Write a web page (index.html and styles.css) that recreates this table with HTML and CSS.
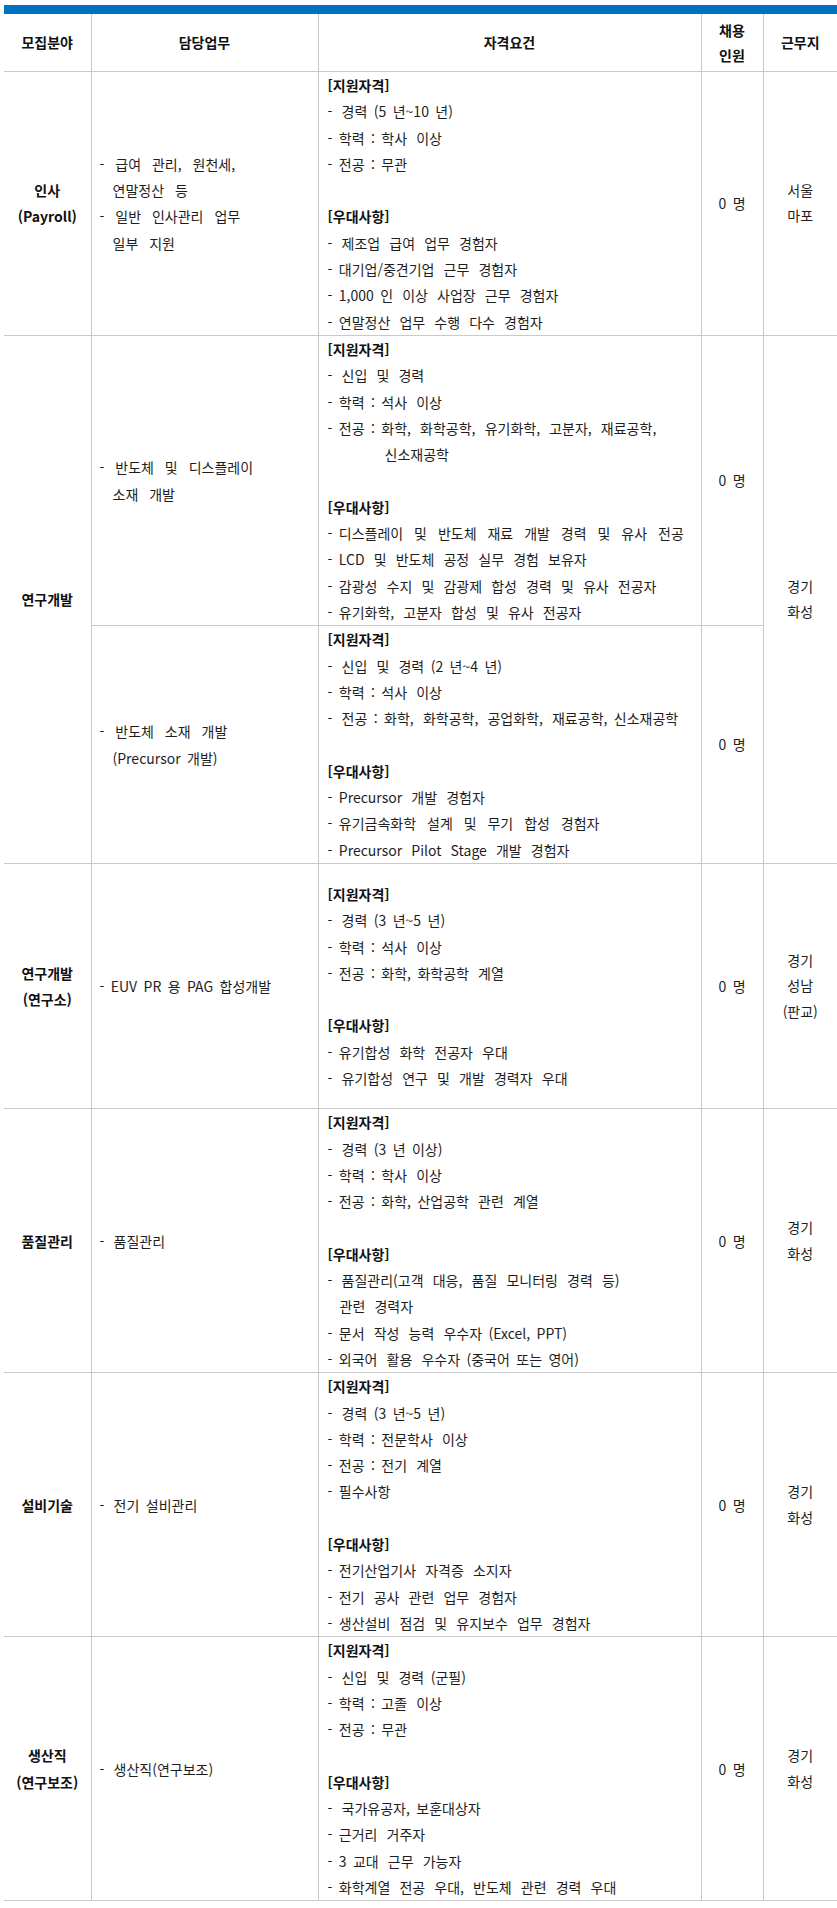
FILE: index.html
```html
<!DOCTYPE html>
<html lang="ko">
<head>
<meta charset="utf-8">
<title>채용 모집요강</title>
<link rel="stylesheet" href="styles.css">
</head>
<body>
<div class="wrap">
  <div class="bar"></div>
  <table class="jobs">
    <colgroup>
      <col class="w1"><col class="w2"><col class="w3"><col class="w4"><col class="w5">
    </colgroup>
    <thead>
      <tr>
        <th class="c1">모집분야</th>
        <th class="c2">담당업무</th>
        <th class="c3">자격요건</th>
        <th class="c4">채용<br>인원</th>
        <th class="c5">근무지</th>
      </tr>
    </thead>
    <tbody>
      <tr>
        <td class="c1 field">인사<br>(Payroll)</td>
        <td class="c2 duty">
          <p class="wide">- 급여 관리, 원천세,</p>
          <p class="wide ind">연말정산 등</p>
          <p class="wide">- 일반 인사관리 업무</p>
          <p class="wide ind">일부 지원</p>
        </td>
        <td class="c3 req">
          <p class="head">[지원자격]</p>
          <p>-&thinsp; 경력 (5 년~10 년)</p>
          <p>- 학력 : <span class="w">학사 이상</span></p>
          <p>- 전공 : 무관</p>
          <p class="head sec">[우대사항]</p>
          <p>-&thinsp; <span class="w">제조업 급여 업무 경험자</span></p>
          <p>- <span class="w">대기업/중견기업 근무 경험자</span></p>
          <p>- 1,000 <span class="w">인 이상 사업장 근무 경험자</span></p>
          <p>- <span class="w">연말정산 업무 수행 다수 경험자</span></p>
        </td>
        <td class="c4 num">0 명</td>
        <td class="c5 loc">서울<br>마포</td>
      </tr>
      <tr>
        <td class="c1 field" rowspan="2">연구개발</td>
        <td class="c2 duty">
          <p class="wide">- 반도체 및 디스플레이</p>
          <p class="wide ind">소재 개발</p>
        </td>
        <td class="c3 req">
          <p class="head">[지원자격]</p>
          <p>-&thinsp; <span class="w">신입 및 경력</span></p>
          <p>- 학력 : <span class="w">석사 이상</span></p>
          <p>- 전공 : <span class="w">화학, 화학공학, 유기화학, 고분자, 재료공학,</span></p>
          <p class="cont">신소재공학</p>
          <p class="head sec">[우대사항]</p>
          <p>- <span class="w2">디스플레이 및 반도체 재료 개발 경력 및 유사 전공</span></p>
          <p>- <span class="w">LCD 및 반도체 공정 실무 경험 보유자</span></p>
          <p>- <span class="w">감광성 수지 및 감광제 합성 경력 및 유사 전공자</span></p>
          <p>- <span class="w">유기화학, 고분자 합성 및 유사 전공자</span></p>
        </td>
        <td class="c4 num">0 명</td>
        <td class="c5 loc" rowspan="2">경기<br>화성</td>
      </tr>
      <tr>
        <td class="c2 duty">
          <p class="wide">- 반도체 소재 개발</p>
          <p class="ind">(Precursor 개발)</p>
        </td>
        <td class="c3 req">
          <p class="head">[지원자격]</p>
          <p>-&thinsp; <span class="w">신입 및 경력</span> (2 년~4 년)</p>
          <p>- 학력 : <span class="w">석사 이상</span></p>
          <p>-&thinsp; 전공 : <span class="w">화학, 화학공학, 공업화학, 재료공학,</span> 신소재공학</p>
          <p class="head sec">[우대사항]</p>
          <p>- <span class="w">Precursor 개발 경험자</span></p>
          <p>- <span class="w2">유기금속화학 설계 및 무기 합성 경험자</span></p>
          <p>- <span class="w">Precursor Pilot Stage 개발 경험자</span></p>
        </td>
        <td class="c4 num">0 명</td>
      </tr>
      <tr>
        <td class="c1 field">연구개발<br>(연구소)</td>
        <td class="c2 duty">
          <p>- EUV PR 용 PAG 합성개발</p>
        </td>
        <td class="c3 req req-pad">
          <p class="head">[지원자격]</p>
          <p>-&thinsp; 경력 (3 년~5 년)</p>
          <p>- 학력 : <span class="w">석사 이상</span></p>
          <p>- 전공 : 화학, <span class="w">화학공학 계열</span></p>
          <p class="head sec">[우대사항]</p>
          <p>- <span class="w">유기합성 화학 전공자 우대</span></p>
          <p>-&thinsp; <span class="w">유기합성 연구 및 개발 경력자 우대</span></p>
        </td>
        <td class="c4 num">0 명</td>
        <td class="c5 loc">경기<br>성남<br>(판교)</td>
      </tr>
      <tr>
        <td class="c1 field">품질관리</td>
        <td class="c2 duty">
          <p>-&thinsp; 품질관리</p>
        </td>
        <td class="c3 req">
          <p class="head">[지원자격]</p>
          <p>-&thinsp; 경력 (3 년 이상)</p>
          <p>- 학력 : <span class="w">학사 이상</span></p>
          <p>- 전공 : 화학, <span class="w">산업공학 관련 계열</span></p>
          <p class="head sec">[우대사항]</p>
          <p>-&thinsp; 품질관리(<span class="w">고객 대응, 품질 모니터링 경력 등</span>)</p>
          <p class="ind2"><span class="w">관련 경력자</span></p>
          <p>- <span class="w">문서 작성 능력 우수자</span> (Excel, PPT)</p>
          <p>- <span class="w">외국어 활용 우수자</span> (중국어 또는 영어)</p>
        </td>
        <td class="c4 num">0 명</td>
        <td class="c5 loc">경기<br>화성</td>
      </tr>
      <tr>
        <td class="c1 field">설비기술</td>
        <td class="c2 duty">
          <p>-&thinsp; 전기 설비관리</p>
        </td>
        <td class="c3 req">
          <p class="head">[지원자격]</p>
          <p>-&thinsp; 경력 (3 년~5 년)</p>
          <p>- 학력 : <span class="w">전문학사 이상</span></p>
          <p>- 전공 : <span class="w">전기 계열</span></p>
          <p>- 필수사항</p>
          <p class="head sec">[우대사항]</p>
          <p>- <span class="w">전기산업기사 자격증 소지자</span></p>
          <p>- <span class="w">전기 공사 관련 업무 경험자</span></p>
          <p>- <span class="w">생산설비 점검 및 유지보수 업무 경험자</span></p>
        </td>
        <td class="c4 num">0 명</td>
        <td class="c5 loc">경기<br>화성</td>
      </tr>
      <tr>
        <td class="c1 field">생산직<br>(연구보조)</td>
        <td class="c2 duty">
          <p>-&thinsp; 생산직(연구보조)</p>
        </td>
        <td class="c3 req">
          <p class="head">[지원자격]</p>
          <p>-&thinsp; <span class="w">신입 및 경력</span> (군필)</p>
          <p>- 학력 : <span class="w">고졸 이상</span></p>
          <p>- 전공 : 무관</p>
          <p class="head sec">[우대사항]</p>
          <p>-&thinsp; 국가유공자, 보훈대상자</p>
          <p>- <span class="w">근거리 거주자</span></p>
          <p>- 3 <span class="w">교대 근무 가능자</span></p>
          <p>- <span class="w">화학계열 전공 우대, 반도체 관련 경력 우대</span></p>
        </td>
        <td class="c4 num">0 명</td>
        <td class="c5 loc">경기<br>화성</td>
      </tr>
    </tbody>
  </table>
</div>
</body>
</html>
```

FILE: styles.css
```css
html, body {
  margin: 0;
  padding: 0;
  background: #fff;
}

body {
  font-family: "Noto Sans CJK KR", "Noto Sans", sans-serif;
  font-size: 14px;
  color: #1e1e1e;
  overflow-x: hidden;
}

.wrap {
  padding: 5px 0 0 4px;
  width: 833px;
}

.bar {
  height: 9px;
  background: #0070c0;
}

.jobs {
  width: 833px;
  border-collapse: collapse;
  table-layout: fixed;
}

.w1 { width: 87px; }
.w2 { width: 227px; }
.w3 { width: 383px; }
.w4 { width: 62px; }
.w5 { width: 74px; }

.jobs th,
.jobs td {
  border-left: 1px solid #c9c9c9;
  border-bottom: 1px solid #c9c9c9;
  padding: 0;
  vertical-align: middle;
  word-spacing: 2.5px;
}

.jobs .c1 {
  border-left: none;
}

.jobs th {
  height: 57px;
  font-weight: 700;
  color: #111;
  line-height: 25px;
  text-align: center;
}

.jobs td {
  line-height: 26.3px;
}

.field {
  text-align: center;
  font-weight: 700;
  color: #111;
}

.jobs .duty {
  padding-left: 8px;
}

.jobs .req {
  padding-left: 9px;
}

.jobs .req-pad {
  padding-top: 17px;
  padding-bottom: 17px;
}

.duty p,
.req p {
  margin: 0;
  white-space: nowrap;
}

.duty .wide {
  word-spacing: 7px;
}

.duty .ind {
  padding-left: 13px;
}

.req .w {
  word-spacing: 5.2px;
}

.req .w2 {
  word-spacing: 7px;
}

.req .ind2 {
  padding-left: 12px;
}

.req .cont {
  padding-left: 57px;
}

.req .head {
  font-weight: 700;
  color: #111;
}

.req .sec {
  margin-top: 26.3px;
}

.num,
.loc {
  text-align: center;
}

.jobs .loc {
  line-height: 25.5px;
}
```
